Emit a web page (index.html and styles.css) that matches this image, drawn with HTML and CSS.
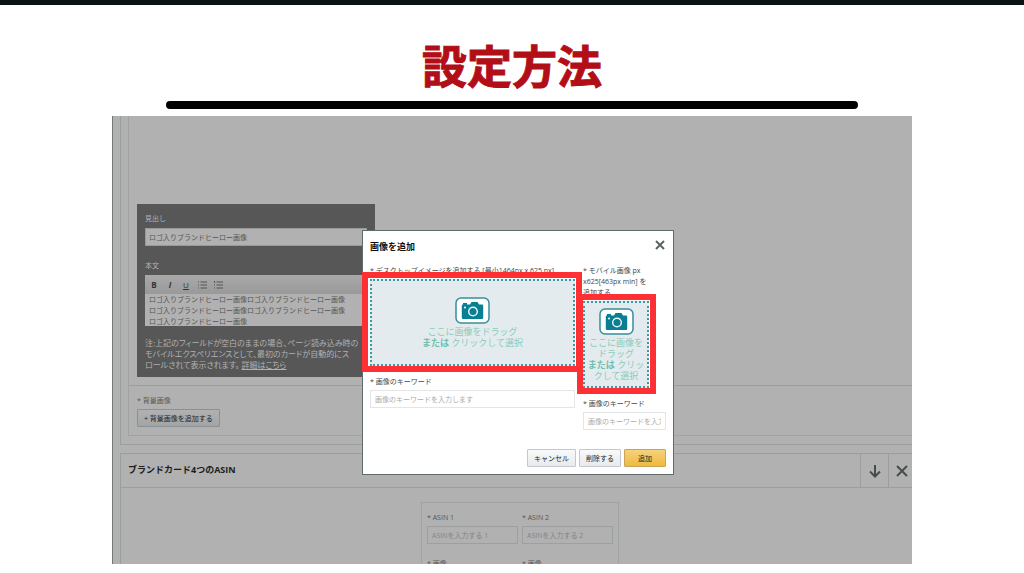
FILE: index.html
```html
<!DOCTYPE html>
<html lang="ja">
<head>
<meta charset="utf-8">
<title>設定方法</title>
<meta name="viewport" content="width=device-width, initial-scale=1">
<link rel="stylesheet" href="styles.css">
</head>
<body>
<header class="slide-head">
  <h1 class="slide-title">設定方法</h1>
</header>

<main class="screen">
  <section class="module">
    <div class="panel">
      <div class="hero">
        <div class="hero-card">
          <label class="label" for="headline">見出し</label>
          <input class="field hero-field" id="headline" type="text" value="ロゴ入りブランドヒーロー画像">
          <label class="label" for="body-text">本文</label>
          <div class="editor">
            <div class="toolbar">
              <button class="tool" type="button"><b>B</b></button>
              <button class="tool" type="button"><b><i>I</i></b></button>
              <button class="tool" type="button"><u>U</u></button>
              <button class="tool" type="button" aria-label="箇条書き"><svg class="tool-icon" viewBox="0 0 9 8"><path d="M0 1h1M0 4h1M0 7h1M2.500 1H9M2.500 4H9M2.500 7H9"/></svg></button>
              <button class="tool" type="button" aria-label="番号付きリスト"><svg class="tool-icon" viewBox="0 0 9 8"><path d="M.5 0v2M0 4h1M0 7h1M2.500 1H9M2.500 4H9M2.500 7H9"/></svg></button>
            </div>
            <textarea class="editor-text" id="body-text">ロゴ入りブランドヒーロー画像ロゴ入りブランドヒーロー画像
ロゴ入りブランドヒーロー画像ロゴ入りブランドヒーロー画像
ロゴ入りブランドヒーロー画像
ロゴ入りブランドヒーロー画像</textarea>
          </div>
          <p class="note">注:上記のフィールドが空白のままの場合、ページ読み込み時の<br>モバイルエクスペリエンスとして、最初のカードが自動的にス<br>ロールされて表示されます。 <a class="note-link" href="#">詳細はこちら</a></p>
        </div>
      </div>
      <div class="background-row">
        <span class="label">* 背景画像</span>
        <button class="button muted" type="button">+ 背景画像を追加する</button>
      </div>
    </div>
  </section>

  <section class="module">
    <div class="module-head">
      <h2 class="module-title">ブランドカード4つのASIN</h2>
      <button class="module-action" type="button" aria-label="下へ移動"><svg class="action-icon" viewBox="0 0 14 14"><path d="M7 1v11M2 7.500l5 5 5-5"/></svg></button>
      <button class="module-action" type="button" aria-label="モジュールを削除"><svg class="action-icon" viewBox="0 0 14 14"><path d="M2 2l10 10M12 2L2 12"/></svg></button>
    </div>
    <div class="asin-card">
      <div class="asin-item">
        <label class="label" for="asin1">* ASIN 1</label>
        <input class="field" id="asin1" type="text" placeholder="ASINを入力する 1">
        <span class="label asin-image">* 画像</span>
      </div>
      <div class="asin-item">
        <label class="label" for="asin2">* ASIN 2</label>
        <input class="field" id="asin2" type="text" placeholder="ASINを入力する 2">
        <span class="label asin-image">* 画像</span>
      </div>
    </div>
  </section>

  <div class="modal" role="dialog" aria-labelledby="modal-title">
    <div class="modal-head">
      <h2 class="modal-title" id="modal-title">画像を追加</h2>
      <button class="close" type="button" aria-label="閉じる"><svg class="close-icon" viewBox="0 0 10 10"><path d="M1 1l8 8M9 1L1 9"/></svg></button>
    </div>
    <div class="modal-body">
      <div class="upload">
        <span class="label">* デスクトップイメージを追加する [最小1464px x 625 px]</span>
        <button class="dropzone" type="button">
          <svg class="camera" viewBox="0 0 35 27"><rect class="camera-frame" x="1" y="1" width="33" height="25" rx="5"/><path class="camera-body" d="M8 7.500V6h4v1.500h3L16.500 5h6L24 7.500h3a1.200 1.200 0 0 1 1.200 1.200v12a1.200 1.200 0 0 1-1.200 1.200H8a1.200 1.200 0 0 1-1.200-1.200v-12A1.200 1.200 0 0 1 8 7.500z"/><circle class="camera-lens" cx="18" cy="14.500" r="4.300"/><circle class="camera-dot" cx="10" cy="10.500" r="1"/></svg>
          <span>ここに画像をドラッグ</span>
          <span><b>または</b> クリックして選択</span>
          <span class="highlight"></span>
        </button>
        <label class="label" for="kw-desktop">* 画像のキーワード</label>
        <input class="field" id="kw-desktop" type="text" placeholder="画像のキーワードを入力します">
      </div>
      <div class="upload">
        <span class="label">* モバイル画像 px<br>x625[463px min] を<br>追加する</span>
        <button class="dropzone mobile" type="button">
          <svg class="camera" viewBox="0 0 35 27"><rect class="camera-frame" x="1" y="1" width="33" height="25" rx="5"/><path class="camera-body" d="M8 7.500V6h4v1.500h3L16.500 5h6L24 7.500h3a1.200 1.200 0 0 1 1.200 1.200v12a1.200 1.200 0 0 1-1.200 1.200H8a1.200 1.200 0 0 1-1.200-1.200v-12A1.200 1.200 0 0 1 8 7.500z"/><circle class="camera-lens" cx="18" cy="14.500" r="4.300"/><circle class="camera-dot" cx="10" cy="10.500" r="1"/></svg>
          <span>ここに画像を<br>ドラッグ</span>
          <span><b>または</b> クリッ<br>クして選択</span>
          <span class="highlight"></span>
        </button>
        <label class="label" for="kw-mobile">* 画像のキーワード</label>
        <input class="field" id="kw-mobile" type="text" placeholder="画像のキーワードを入力します">
      </div>
    </div>
    <div class="modal-foot">
      <button class="button" type="button">キャンセル</button>
      <button class="button" type="button">削除する</button>
      <button class="button primary" type="button">追加</button>
    </div>
  </div>
</main>
</body>
</html>
```

FILE: styles.css
```css
* {
  box-sizing: border-box;
}

body {
  margin: 0;
  border-top: 5px solid #0b1216;
  background: #fff;
  color: #444;
  font-family: "Open Sans", "Noto Sans CJK JP", sans-serif;
  font-size: 7px;
  line-height: 11px;
}

button,
input,
textarea {
  font: inherit;
  color: inherit;
  margin: 0;
}

button {
  padding: 0;
  border: 0;
  background: none;
}

h1,
h2,
p {
  margin: 0;
}

svg {
  display: block;
}

.slide-head {
  margin: 0 166px;
  padding-top: 32px;
}

.slide-title {
  padding-bottom: 8px;
  color: #b20e18;
  font-family: "Noto Sans CJK JP", sans-serif;
  font-size: 45px;
  font-weight: 700;
  line-height: 56px;
  text-align: center;
  -webkit-text-stroke: 1px #b20e18;
}

.slide-head::after {
  content: "";
  display: block;
  width: 100%;
  height: 8px;
  border-radius: 4px;
  background: #000;
}

.screen {
  position: relative;
  height: 448px;
  margin: 7px 112px 0;
  padding-left: 7px;
  overflow: hidden;
  border-left: 1px solid #737878;
  background: #b1b1b1;
}

/* Modules run past the right edge of the screen */
.module {
  margin: 0 -8px 8px 0;
  border: 1px solid #999e9e;
  color: #555;
}

.module:first-child {
  border-top: 0;
}

.panel {
  margin: 0 -8px 8px 7px;
  border: 1px solid #a0a3a3;
  border-top: 0;
}

.hero {
  padding: 88px 8px 8px;
  border-bottom: 1px solid #999e9e;
}

.hero-card {
  display: flex;
  flex-direction: column;
  gap: 4px;
  width: 238px;
  padding: 9px 8px 7px;
  background: #575757;
  color: #b1b1b1;
}

.label {
  display: block;
}

.field {
  display: block;
  width: 100%;
  height: 18px;
  padding: 0 4px;
  border: 1px solid #e3e6e6;
  background: none;
  outline: 0;
}

.field::placeholder {
  color: #aaa;
  opacity: 1;
}

.hero-field {
  margin-bottom: 10px;
  padding: 0 3px;
  border-color: #999;
  background: #b1b1b1;
  color: #555;
}

.editor {
  background: #b1b1b1;
  color: #555;
}

.toolbar {
  display: flex;
  height: 19px;
  padding: 0 1px;
  background: linear-gradient(#a9a9a9, #999);
}

.tool {
  display: grid;
  place-items: center;
  width: 16px;
  font-size: 8px;
  color: #333;
}

.tool-icon {
  width: 9px;
  height: 8px;
  fill: none;
  stroke: #555;
}

.editor-text {
  display: block;
  width: 100%;
  height: 32px;
  padding: 0 0 0 4px;
  border: 0;
  background: none;
  resize: none;
  overflow-y: scroll;
  outline: 0;
}

.editor-text::-webkit-scrollbar {
  width: 9px;
}

.editor-text::-webkit-scrollbar-thumb {
  background: #888;
}

.note {
  padding-top: 7px;
  font-size: 8px;
  font-feature-settings: "palt";
  white-space: nowrap;
}

.note-link {
  color: inherit;
}

.background-row {
  padding: 9px 8px 8px;
}

.button {
  height: 18px;
  padding: 0 6px;
  border: 1px solid #c4c8cc;
  border-radius: 1px;
  background: linear-gradient(#f8f9fa, #e8eaee);
  color: #222;
}

.button.muted {
  display: block;
  margin-top: 3px;
  border-color: #8b9092;
  background: linear-gradient(#b0b1b2, #a2a4a6);
}

.button.primary {
  padding: 0 13px;
  border-color: #c9a657;
  background: linear-gradient(#f6d27c, #efb93e);
}

.module-head {
  display: flex;
  height: 34px;
  border-bottom: 1px solid #999e9e;
}

.module-title {
  flex: 1;
  padding-left: 7px;
  color: #1c1c1c;
  font-size: 9px;
  line-height: 31px;
}

.module-action {
  display: grid;
  place-items: center;
  width: 28px;
  border-left: 1px solid #999e9e;
}

.module-action:last-child {
  width: 31px;
  padding-right: 4px;
}

.action-icon {
  width: 14px;
  height: 14px;
  fill: none;
  stroke: #454d4f;
  stroke-width: 2;
}

.asin-card {
  display: grid;
  grid-template-columns: 1fr 1fr;
  gap: 4px;
  width: 198px;
  margin: 14px auto 0;
  padding: 9px 5px;
  border: 1px solid #a0a3a3;
  position: relative;
}

.asin-item .field {
  margin-top: 3px;
  border-color: #9da0a0;
}

.asin-item .field::placeholder {
  color: #848484;
}

.asin-image {
  margin-top: 14px;
}

.modal {
  position: absolute;
  top: 114px;
  left: 249px;
  width: 312px;
  padding: 7px;
  border: 1px solid #626b6c;
  background: #fff;
}

.modal-head {
  display: flex;
  justify-content: space-between;
  align-items: center;
  height: 16px;
}

.modal-title {
  color: #111;
  font-size: 9px;
}

.close {
  padding: 0 1px 2px 0;
}

.close-icon {
  width: 10px;
  height: 10px;
  fill: none;
  stroke: #5c6466;
  stroke-width: 2;
}

.modal-body {
  display: grid;
  grid-template-columns: 205fr 83fr;
  gap: 8px;
  padding-top: 11px;
}

.upload {
  min-width: 0;
  white-space: nowrap;
}

.upload .field {
  margin-top: 3px;
}

.dropzone {
  position: relative;
  display: flex;
  flex-direction: column;
  align-items: center;
  width: 100%;
  height: 87px;
  margin: 3px 0 10px;
  padding-top: 16px;
  border: 2px dotted #3a9ba6;
  background: #e4ebee;
  color: #8accbd;
  font-size: 9px;
}

.dropzone b {
  color: #6fbfaf;
}

.dropzone.mobile {
  width: 66px;
  padding-top: 5px;
}

.camera {
  width: 35px;
  height: 27px;
  flex: none;
  margin-bottom: 2px;
}

.camera-frame {
  fill: #fff;
  stroke: #368e9c;
  stroke-width: 1.500;
}

.camera-body {
  fill: #087f93;
}

.camera-lens {
  fill: none;
  stroke: #e9f4f5;
  stroke-width: 1.500;
}

.camera-dot {
  fill: #fff;
}

/* Red frames drawn over each drop area */
.highlight {
  position: absolute;
  inset: -9px -9px -8px -10px;
  border: 6px solid #fe3033;
}

.mobile .highlight {
  inset: -9px -9px -8px -8px;
}

.modal-foot {
  display: flex;
  justify-content: flex-end;
  gap: 3px;
  padding-top: 19px;
}
```
